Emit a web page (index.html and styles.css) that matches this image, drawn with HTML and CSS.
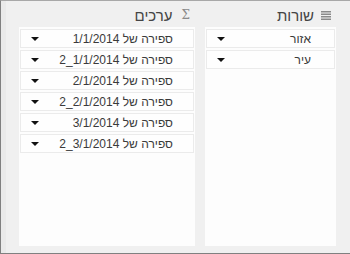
FILE: index.html
```html
<!DOCTYPE html>
<html lang="he" dir="rtl">
<head>
<meta charset="utf-8">
<link rel="stylesheet" href="styles.css">
</head>
<body>
<div class="frame">
  <div class="strip"></div>
  <div class="areas">
    <section class="area area-rows">
      <header class="area-head">
        <svg class="icon" width="10" height="9" viewBox="0 0 10 9"><rect x="0" y="0" width="10" height="1.5" fill="#8a8a8a"/><rect x="0" y="2.5" width="10" height="1.5" fill="#8a8a8a"/><rect x="0" y="5" width="10" height="1.5" fill="#8a8a8a"/><rect x="0" y="7.5" width="10" height="1.5" fill="#8a8a8a"/></svg>
        <span class="area-title">שורות</span>
      </header>
      <div class="panel">
        <div class="field"><span class="field-name">אזור</span><span class="arrow"></span></div>
        <div class="field"><span class="field-name">עיר</span><span class="arrow"></span></div>
      </div>
    </section>
    <section class="area area-values">
      <header class="area-head">
        <span class="sigma">Σ</span>
        <span class="area-title">ערכים</span>
      </header>
      <div class="panel">
        <div class="field"><span class="field-name">ספירה של <span class="num" dir="ltr">1/1/2014</span></span><span class="arrow"></span></div>
        <div class="field"><span class="field-name">ספירה של <span class="num" dir="ltr">2_1/1/2014</span></span><span class="arrow"></span></div>
        <div class="field"><span class="field-name">ספירה של <span class="num" dir="ltr">2/1/2014</span></span><span class="arrow"></span></div>
        <div class="field"><span class="field-name">ספירה של <span class="num" dir="ltr">2_2/1/2014</span></span><span class="arrow"></span></div>
        <div class="field"><span class="field-name">ספירה של <span class="num" dir="ltr">3/1/2014</span></span><span class="arrow"></span></div>
        <div class="field"><span class="field-name">ספירה של <span class="num" dir="ltr">2_3/1/2014</span></span><span class="arrow"></span></div>
      </div>
    </section>
  </div>
</div>
</body>
</html>
```
FILE: styles.css
```css
* { box-sizing: border-box; }
html, body { margin: 0; padding: 0; }
body {
  width: 350px;
  height: 254px;
  background: #f0f0f0;
  font-family: "Liberation Sans", "DejaVu Sans", sans-serif;
  font-size: 12px;
  color: #3a3a3a;
  overflow: hidden;
}
.frame {
  height: 254px;
  display: flex;
  flex-direction: row-reverse;
  border-left: 1px solid #808080;
  border-top: 1px solid #a8a8a8;
  border-bottom: 1px solid #808080;
}
.strip {
  width: 5px;
  background: #eaeaea;
  flex: none;
}
.areas {
  flex: 1;
  display: flex;
  gap: 10px;
  padding: 0 14px 7px 13px;
}
.area {
  display: flex;
  flex-direction: column;
}
.area-rows { width: 131px; }
.area-values { width: 176px; }
.area-head {
  height: 26px;
  display: flex;
  align-items: center;
  gap: 9px;
  padding: 2px 5px 0 0;
  color: #444;
  font-size: 15px;
}
.area-rows .area-head { padding-right: 5px; gap: 7px; }
.sigma {
  color: #8a8a8a;
  font-family: "DejaVu Serif", serif;
  font-size: 12px;
}
.icon { flex: none; }
.panel {
  flex: 1;
  background: #fdfdfd;
  padding: 2px 1px;
  display: flex;
  flex-direction: column;
  gap: 2px;
}
.field {
  height: 19px;
  border: 1px solid #ebebeb;
  background: #fefefe;
  display: flex;
  align-items: center;
  justify-content: space-between;
  padding: 0 20px 0 10px;
}
.area-rows .field { padding-right: 23px; }
.field-name { white-space: nowrap; }
.num { unicode-bidi: isolate; }
.arrow {
  width: 0;
  height: 0;
  border-left: 4px solid transparent;
  border-right: 4px solid transparent;
  border-top: 4px solid #111;
}
```
